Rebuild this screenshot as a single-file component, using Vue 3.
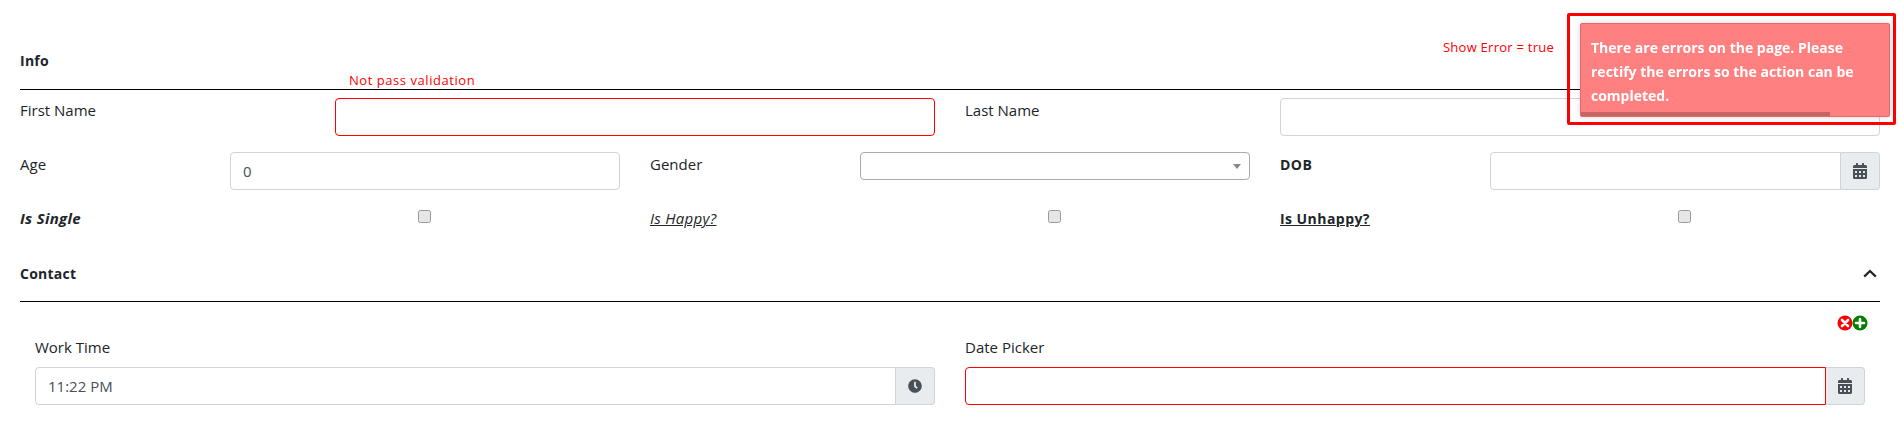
<template>
  <div class="page">
    <section class="section">
      <div class="section-header">
        <span class="section-title">Info</span>
        <span class="debug-note">Show Error = true</span>
      </div>
      <div class="grid-two row-first">
        <div v-for="field in nameFields" :key="field.label" class="field-name">
          <label class="field-label inset">{{ field.label }}</label>
          <div class="input-wrap">
            <span v-if="field.error" class="error-text">Not pass validation</span>
            <input class="text-input" :class="{ invalid: field.error }" type="text" />
          </div>
        </div>
      </div>
      <div class="grid-three row-second">
        <div class="field-third">
          <label class="field-label inset">Age</label>
          <input class="text-input" type="text" value="0" />
        </div>
        <div class="field-third">
          <label class="field-label inset">Gender</label>
          <div class="select-box"><span class="select-arrow"></span></div>
        </div>
        <div class="field-third">
          <label class="field-label inset bold">DOB</label>
          <div class="input-group">
            <input class="text-input" type="text" />
            <span class="addon">
              <svg class="icon-cal" viewBox="0 0 448 512"><path :d="calendarPath" /></svg>
            </span>
          </div>
        </div>
      </div>
      <div class="grid-three row-third">
        <div v-for="check in checks" :key="check.label" class="field-third">
          <label class="field-label" :class="check.cls">{{ check.label }}</label>
          <div class="check-cell"><span class="checkbox"></span></div>
        </div>
      </div>
    </section>

    <section class="section">
      <div class="section-header contact">
        <span class="section-title">Contact</span>
        <svg class="chevron" viewBox="0 0 14 9">
          <polyline points="1.2,7.6 7,2 12.8,7.6" />
        </svg>
      </div>
      <div class="repeat-tools">
        <svg class="round-icon" viewBox="0 0 16 16">
          <circle cx="8" cy="8" r="7.5" fill="#f00" />
          <path d="M5 5l6 6M11 5l-6 6" stroke="#fff" stroke-width="2.6" stroke-linecap="round" />
        </svg>
        <svg class="round-icon" viewBox="0 0 16 16">
          <circle cx="8" cy="8" r="7.5" fill="#008000" />
          <path d="M8 4v8M4 8h8" stroke="#fff" stroke-width="2.6" stroke-linecap="round" />
        </svg>
      </div>
      <div class="grid-two contact-row">
        <div class="field-stack">
          <label class="field-label">Work Time</label>
          <div class="input-group">
            <input class="text-input" type="text" value="11:22 PM" />
            <span class="addon">
              <svg class="icon-clock" viewBox="0 0 512 512"><path :d="clockPath" /></svg>
            </span>
          </div>
        </div>
        <div class="field-stack">
          <label class="field-label">Date Picker</label>
          <div class="input-group">
            <input class="text-input invalid" type="text" />
            <span class="addon">
              <svg class="icon-cal" viewBox="0 0 448 512"><path :d="calendarPath" /></svg>
            </span>
          </div>
        </div>
      </div>
    </section>

    <div class="toast-frame">
      <div class="toast">
        <div class="toast-message">There are errors on the page. Please rectify the errors so the action can be completed.</div>
        <div class="toast-progress"></div>
      </div>
    </div>
  </div>
</template>

<script setup>
const nameFields = [
  { label: "First Name", error: true },
  { label: "Last Name", error: false },
];

const checks = [
  { label: "Is Single", cls: "bold italic" },
  { label: "Is Happy?", cls: "italic underline" },
  { label: "Is Unhappy?", cls: "bold underline" },
];

const calendarPath =
  "M0 464c0 26.5 21.5 48 48 48h352c26.5 0 48-21.5 48-48V192H0v272zm320-196c0-6.6 5.4-12 12-12h40c6.6 0 12 5.4 12 12v40c0 6.6-5.4 12-12 12h-40c-6.6 0-12-5.4-12-12v-40zm0 128c0-6.6 5.4-12 12-12h40c6.6 0 12 5.4 12 12v40c0 6.6-5.4 12-12 12h-40c-6.6 0-12-5.4-12-12v-40zM192 268c0-6.6 5.4-12 12-12h40c6.6 0 12 5.4 12 12v40c0 6.6-5.4 12-12 12h-40c-6.6 0-12-5.4-12-12v-40zm0 128c0-6.6 5.4-12 12-12h40c6.6 0 12 5.4 12 12v40c0 6.6-5.4 12-12 12h-40c-6.6 0-12-5.4-12-12v-40zM64 268c0-6.6 5.4-12 12-12h40c6.6 0 12 5.4 12 12v40c0 6.6-5.4 12-12 12H76c-6.6 0-12-5.4-12-12v-40zm0 128c0-6.6 5.4-12 12-12h40c6.6 0 12 5.4 12 12v40c0 6.6-5.4 12-12 12H76c-6.6 0-12-5.4-12-12v-40zM400 64h-48V16c0-8.8-7.2-16-16-16h-32c-8.8 0-16 7.2-16 16v48H160V16c0-8.8-7.2-16-16-16h-32c-8.8 0-16 7.2-16 16v48H48C21.5 64 0 85.5 0 112v48h448v-48c0-26.5-21.5-48-48-48z";

const clockPath =
  "M256,8C119,8,8,119,8,256S119,504,256,504,504,393,504,256,393,8,256,8Zm92.49,313h0l-20,25a16,16,0,0,1-22.49,2.5h0l-67-49.72a40,40,0,0,1-15-31.23V112a16,16,0,0,1,16-16h32a16,16,0,0,1,16,16V256l58,42.5A16,16,0,0,1,348.49,321Z";
</script>

<style>
body {
  background: #fff;
  overflow: hidden;
}
</style>

<style scoped>
.page {
  padding: 0 19px 0 20px;
  color: #212529;
  font-family: "Open Sans", "Liberation Sans", sans-serif;
  font-size: 15px;
  line-height: 21px;
}

.section-header {
  display: flex;
  align-items: center;
  justify-content: space-between;
  padding: 50px 0 18px;
  border-bottom: 1px solid #000;
}

.section-header.contact {
  padding: 34px 0 17px;
}

.section-title {
  font-weight: 700;
  font-size: 14px;
  letter-spacing: 0.25px;
}

.debug-note {
  margin: -26px 326px 0 0;
  color: #f00;
  font-size: 13px;
  letter-spacing: 0.25px;
}

.grid-two {
  display: grid;
  grid-template-columns: 1fr 1fr;
  column-gap: 30px;
}

.grid-three {
  display: grid;
  grid-template-columns: repeat(3, 1fr);
  column-gap: 30px;
}

.row-first {
  margin-top: 8px;
}

.row-second {
  margin-top: 16px;
}

.row-third {
  margin-top: 18px;
}

.field-name {
  display: grid;
  grid-template-columns: 315px 1fr;
}

.field-third {
  display: grid;
  grid-template-columns: 210px 1fr;
}

.field-label {
  display: block;
}

.field-label.inset {
  padding-top: 2px;
}

.bold {
  font-size: 14px;
  font-weight: 700;
  letter-spacing: 0.45px;
}

.italic {
  font-size: 15px;
  font-style: italic;
  letter-spacing: 0.3px;
}

.underline {
  text-decoration: underline;
}

.input-wrap {
  position: relative;
}

.error-text {
  position: absolute;
  left: 14px;
  top: -27px;
  color: #f00;
  font-size: 13px;
  letter-spacing: 0.55px;
  line-height: 18px;
  white-space: nowrap;
}

.text-input {
  display: block;
  box-sizing: border-box;
  width: 100%;
  min-width: 0;
  height: 38px;
  padding: 6px 12px;
  border: 1px solid #ced4da;
  border-radius: 4px;
  background: #fff;
  color: #495057;
  font: inherit;
}

.text-input.invalid {
  border-color: #f00;
}

.select-box {
  display: flex;
  align-items: center;
  justify-content: flex-end;
  box-sizing: border-box;
  height: 28px;
  padding-right: 8px;
  border: 1px solid #aaa;
  border-radius: 4px;
  background: #fff;
}

.select-arrow {
  width: 0;
  height: 0;
  border-top: 5px solid #888;
  border-left: 4px solid transparent;
  border-right: 4px solid transparent;
}

.input-group {
  display: flex;
}

.input-group .text-input {
  flex: 1;
  border-top-right-radius: 0;
  border-bottom-right-radius: 0;
}

.addon {
  display: flex;
  align-items: center;
  justify-content: center;
  box-sizing: border-box;
  width: 39px;
  height: 38px;
  border: 1px solid #ced4da;
  border-left: none;
  border-radius: 0 4px 4px 0;
  background: #e9ecef;
}

.icon-cal {
  width: 14px;
  height: 16px;
  fill: #495057;
}

.icon-clock {
  width: 14px;
  height: 14px;
  fill: #495057;
}

.check-cell {
  display: flex;
  justify-content: center;
  padding: 2px 2px 0 0;
}

.checkbox {
  box-sizing: border-box;
  width: 13px;
  height: 13px;
  border: 1px solid #999;
  border-radius: 2.5px;
  background: #e6e6e6;
}

.chevron {
  width: 14px;
  height: 9px;
  margin-right: 3px;
  fill: none;
  stroke: #212529;
  stroke-width: 2.2;
}

.repeat-tools {
  display: flex;
  justify-content: flex-end;
  height: 16px;
  margin-top: 13px;
  padding-right: 12px;
}

.round-icon {
  display: block;
  width: 16px;
  height: 16px;
  margin-left: -1px;
}

.contact-row {
  margin-top: 6px;
  padding: 0 15px;
}

.field-stack .field-label {
  margin-bottom: 9px;
}

.toast-frame {
  position: fixed;
  top: 13px;
  left: 1567px;
  box-sizing: border-box;
  width: 329px;
  height: 112px;
  padding: 7px 3px 5px 10px;
  border: 3px solid #f00;
  border-radius: 2px;
}

.toast {
  position: relative;
  box-sizing: border-box;
  width: 310px;
  height: 94px;
  padding: 12px 10px;
  border: 1px solid #e06a6a;
  border-radius: 2px;
  background: #ff8080;
  box-shadow: 0 0 6px rgba(0, 0, 0, 0.15);
  color: #fff;
  font-size: 14px;
  font-weight: 700;
  line-height: 24px;
}

.toast-progress {
  position: absolute;
  left: 0;
  bottom: 0;
  width: 249px;
  height: 4px;
  background: #c86464;
}
</style>
